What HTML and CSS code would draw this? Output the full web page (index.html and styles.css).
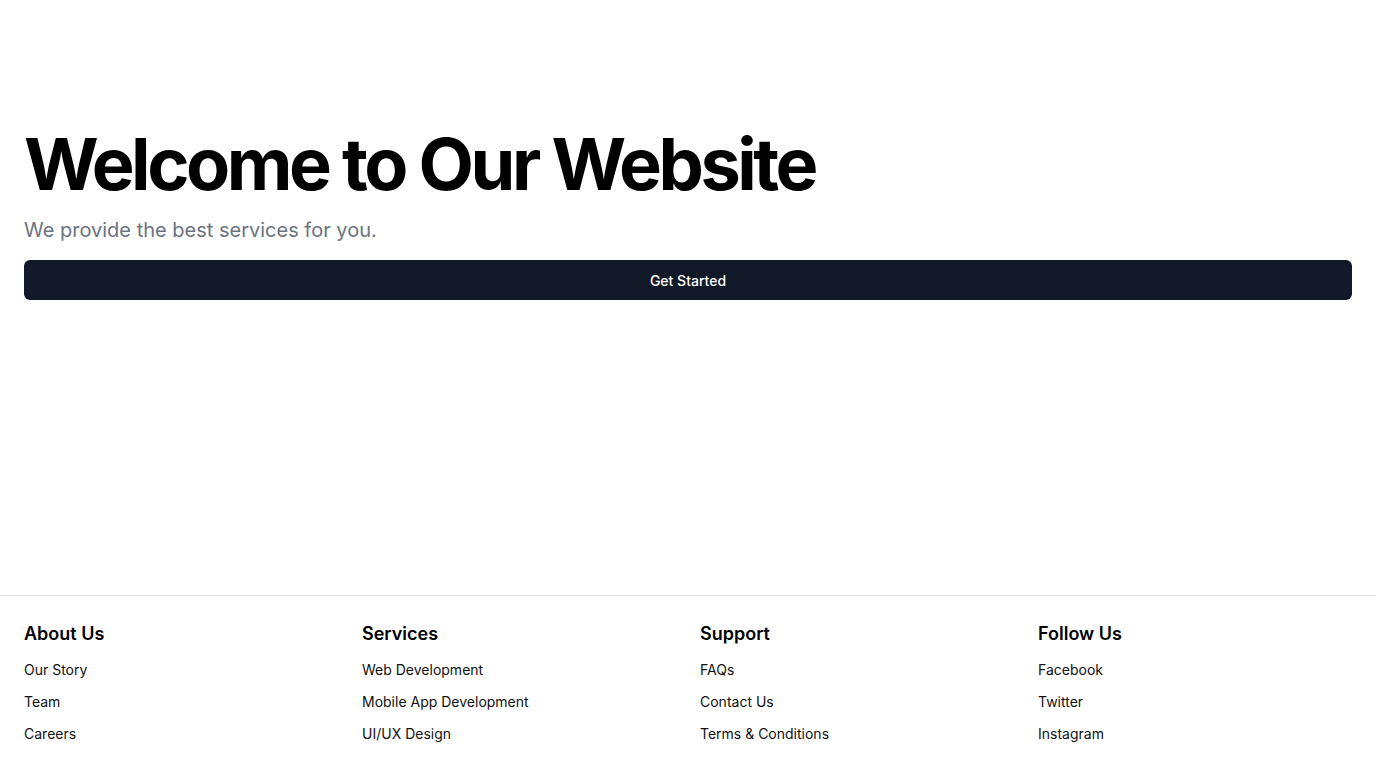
FILE: index.html
```html
<!DOCTYPE html>
<html lang="en">
<head>
<meta charset="utf-8">
<title>Welcome</title>
<link rel="stylesheet" href="styles.css">
</head>
<body>
<div class="page">
  <main class="hero">
    <h1 class="hero-title">Welcome to Our Website</h1>
    <p class="hero-sub">We provide the best services for you.</p>
    <button class="hero-btn">Get Started</button>
  </main>
  <footer class="footer">
    <div class="footer-grid">
      <div class="footer-col">
        <h3 class="footer-head">About Us</h3>
        <ul class="footer-list">
          <li><a href="#">Our Story</a></li>
          <li><a href="#">Team</a></li>
          <li><a href="#">Careers</a></li>
        </ul>
      </div>
      <div class="footer-col">
        <h3 class="footer-head">Services</h3>
        <ul class="footer-list">
          <li><a href="#">Web Development</a></li>
          <li><a href="#">Mobile App Development</a></li>
          <li><a href="#">UI/UX Design</a></li>
        </ul>
      </div>
      <div class="footer-col">
        <h3 class="footer-head">Support</h3>
        <ul class="footer-list">
          <li><a href="#">FAQs</a></li>
          <li><a href="#">Contact Us</a></li>
          <li><a href="#">Terms &amp; Conditions</a></li>
        </ul>
      </div>
      <div class="footer-col">
        <h3 class="footer-head">Follow Us</h3>
        <ul class="footer-list">
          <li><a href="#">Facebook</a></li>
          <li><a href="#">Twitter</a></li>
          <li><a href="#">Instagram</a></li>
        </ul>
      </div>
    </div>
  </footer>
</div>
</body>
</html>
```
FILE: styles.css
```css
* { box-sizing: border-box; }
html, body { margin: 0; padding: 0; }
body {
  font-family: Inter, "Noto Sans", sans-serif;
  color: #000;
  background: #fff;
}
.page {
  min-height: 100vh;
  display: flex;
  flex-direction: column;
}
.hero {
  flex: 1;
  padding: 128px 24px 24px;
}
.hero-title {
  margin: 0;
  font-size: 72px;
  line-height: 1;
  font-weight: 700;
  letter-spacing: -0.048em;
  color: #000;
}
.hero-sub {
  margin: 16px 0 0;
  font-size: 20px;
  line-height: 28px;
  color: #6b7280;
}
.hero-btn {
  display: block;
  width: 100%;
  margin-top: 16px;
  height: 40px;
  border: 0;
  border-radius: 6px;
  background: #111827;
  color: #fff;
  font-family: inherit;
  font-size: 14px;
  font-weight: 500;
}
.footer {
  border-top: 1px solid #e5e7eb;
  padding: 24px;
}
.footer-grid {
  display: grid;
  grid-template-columns: repeat(4, 1fr);
  gap: 24px;
}
.footer-head {
  margin: 0 0 12px;
  font-size: 18px;
  line-height: 28px;
  font-weight: 600;
}
.footer-list {
  list-style: none;
  margin: 0;
  padding: 0;
  display: flex;
  flex-direction: column;
  gap: 12px;
}
.footer-list a {
  display: block;
  font-size: 14px;
  line-height: 20px;
  color: #111;
  text-decoration: none;
}
```
